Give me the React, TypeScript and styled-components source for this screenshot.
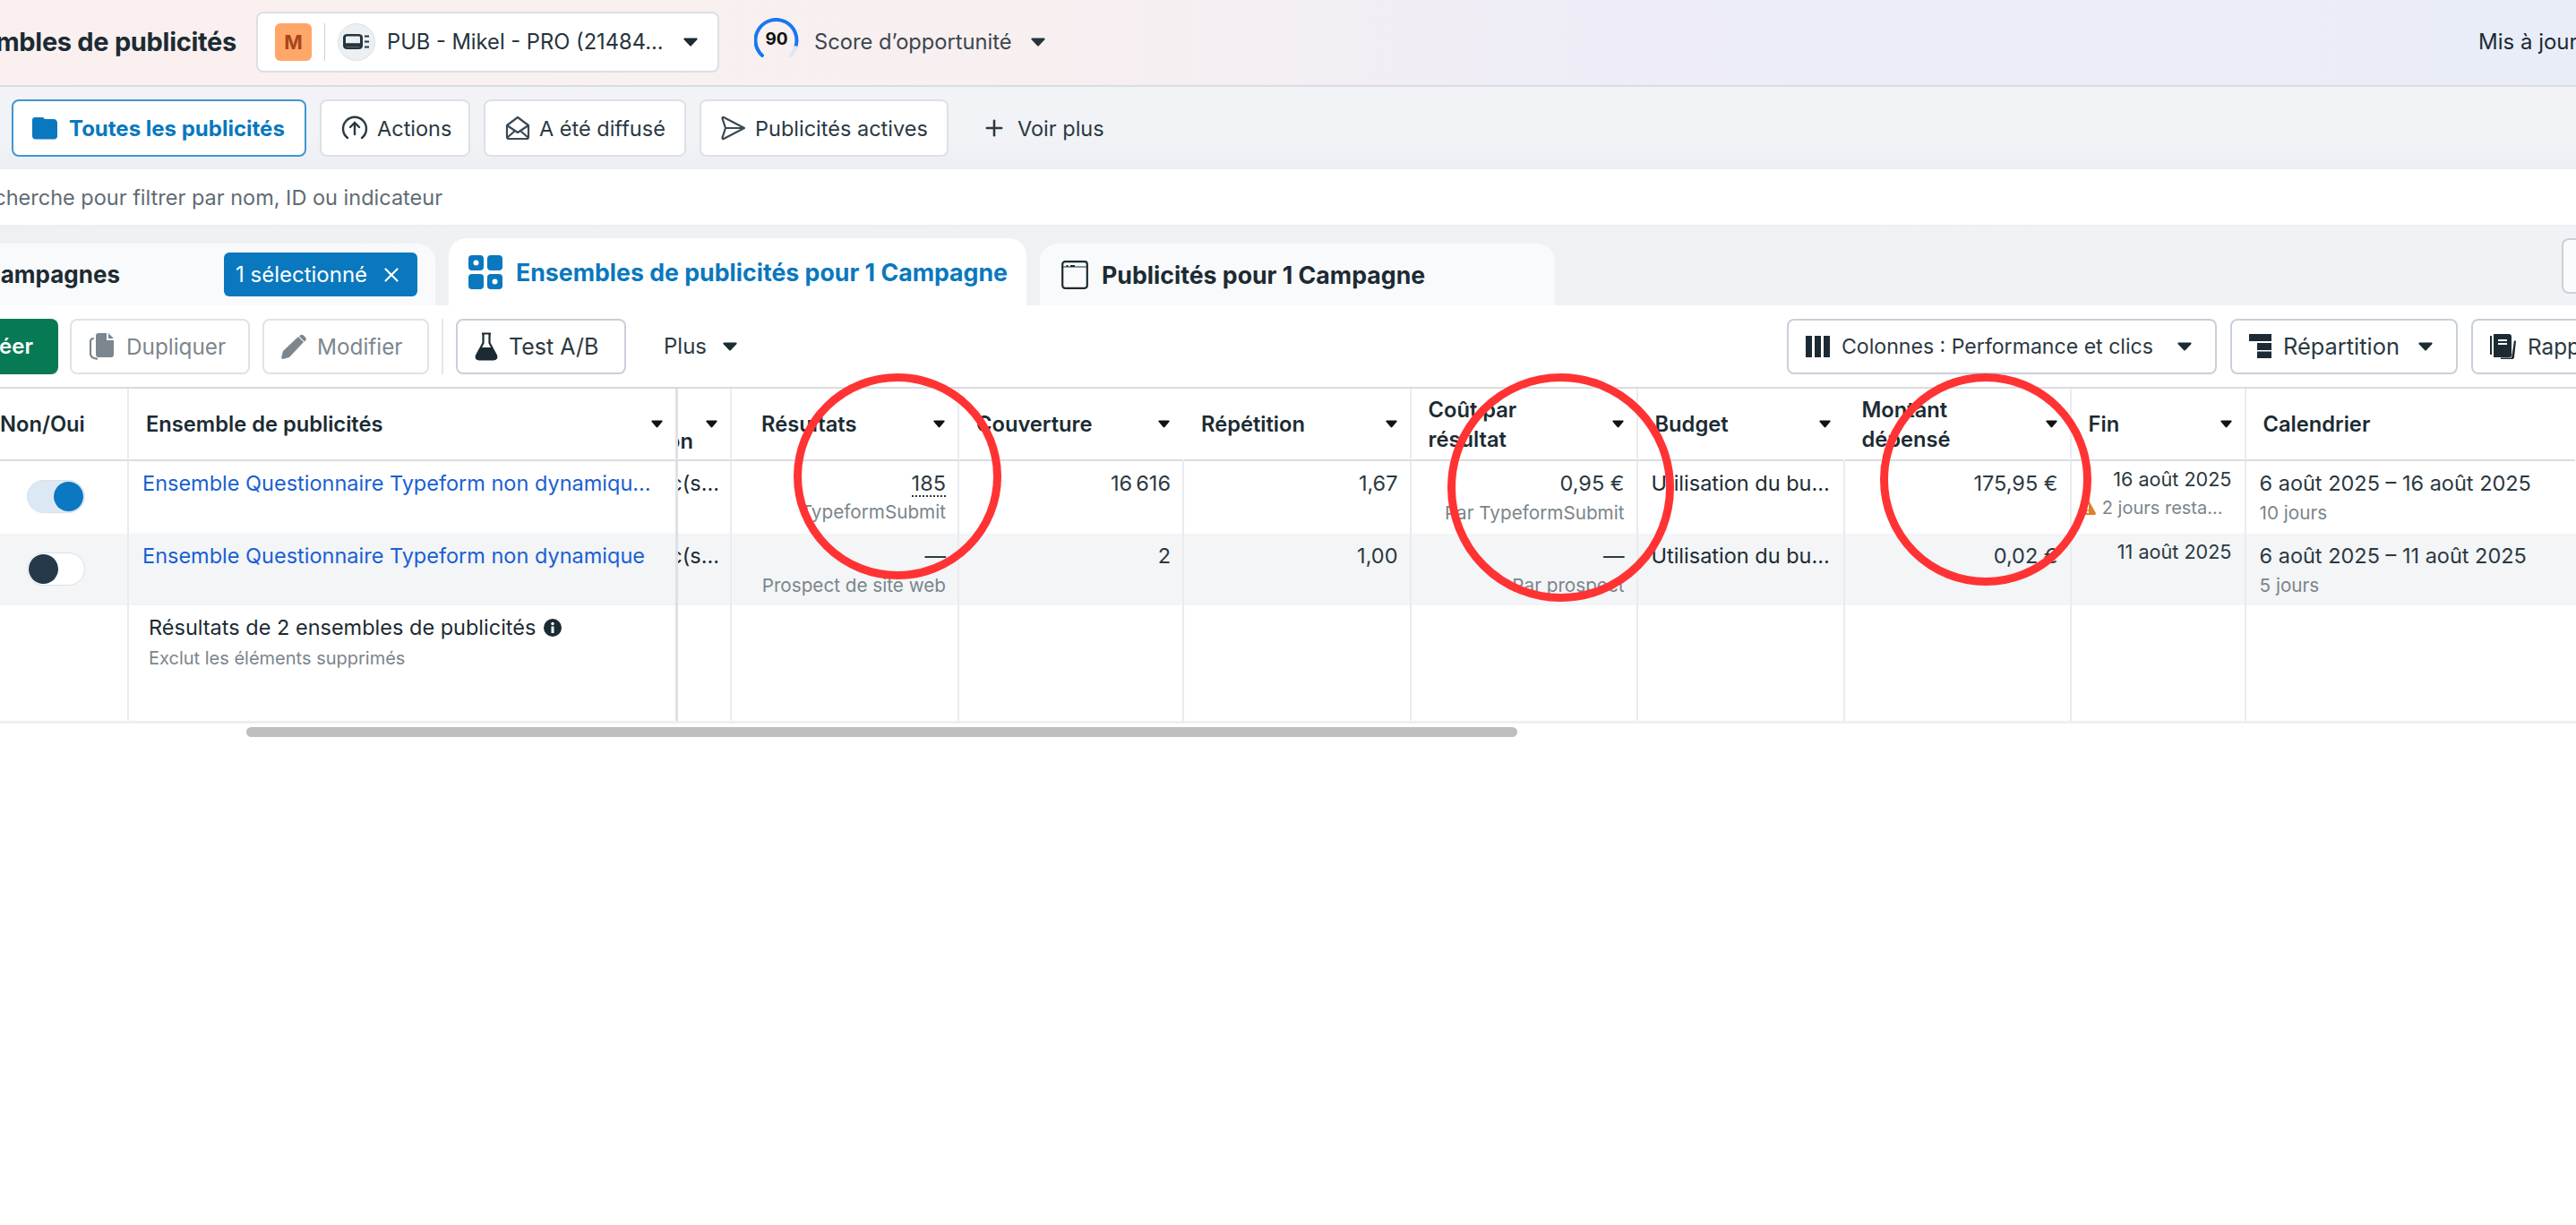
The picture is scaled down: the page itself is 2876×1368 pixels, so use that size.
import React from "react";
import styled, { createGlobalStyle } from "styled-components";
import { Plus, X } from "lucide-react";

const GlobalStyle = createGlobalStyle`
    html, body {
        margin: 0;
        padding: 0;
        background: #fff;
    }
    * {
        box-sizing: border-box;
    }
`;

const Page = styled.div`
    position: relative;
    width: 2876px;
    height: 1368px;
    overflow: hidden;
    background: #fff;
    color: #1c2b33;
    font-family: Inter, "Liberation Sans", sans-serif;
    font-size: 23.5px;
`;

const TopBar = styled.header`
    display: flex;
    align-items: center;
    height: 97px;
    padding-bottom: 2px;
    background: linear-gradient(90deg, #faf0ef 0%, #f8eff0 40%, #eeedf7 62%, #e9edf8 100%);
    border-bottom: 2px solid #d9dce1;
`;

const PageTitle = styled.h1`
    display: flex;
    justify-content: flex-end;
    width: 264px;
    margin: 0;
    overflow: hidden;
    white-space: nowrap;
    font-size: 29px;
    font-weight: 700;
    letter-spacing: -0.3px;
`;

const AccountBox = styled.div`
    display: flex;
    align-items: center;
    width: 517px;
    height: 68px;
    margin-left: 22px;
    padding-left: 19px;
    background: #fff;
    border: 2px solid #dcdfe5;
    border-radius: 8px;
`;

const AccountAvatar = styled.div`
    display: flex;
    align-items: center;
    justify-content: center;
    width: 41px;
    height: 42px;
    background: #ffa669;
    border-radius: 6px;
    color: #a8451b;
    font-size: 22px;
    font-weight: 700;
`;

const AccountDivider = styled.span`
    width: 1px;
    height: 42px;
    margin: 0 14px;
    background: #ccd0d5;
`;

const AccountIcon = styled.div`
    display: flex;
    align-items: center;
    justify-content: center;
    width: 42px;
    height: 42px;
    background: #edf0f3;
    border: 1px solid #dde1e5;
    border-radius: 50%;
`;

const AccountName = styled.span`
    margin: 0 22px 0 13px;
    white-space: nowrap;
    font-size: 23.7px;
    color: #26343d;
`;

const ScoreBox = styled.div`
    display: flex;
    align-items: center;
    margin-left: 39px;
`;

const ScoreGauge = styled.div`
    position: relative;
    display: flex;
    align-items: center;
    justify-content: center;
    width: 50px;
    height: 48px;
    margin-bottom: 6px;
    font-size: 19px;
    font-weight: 700;
    color: #111;
`;

const GaugeSvg = styled.svg`
    position: absolute;
    inset: 0;
`;

const ScoreLabel = styled.span`
    margin: 0 21px 0 17px;
    font-size: 23.7px;
    color: #3a4750;
`;

const UpdatedAt = styled.div`
    width: 109px;
    margin-left: auto;
    overflow: hidden;
    white-space: nowrap;
    font-size: 24px;
`;

const FilterBar = styled.nav`
    display: flex;
    align-items: center;
    gap: 15px;
    height: 92px;
    padding: 0 0 0 13px;
    background: linear-gradient(180deg, #f2f3f7 0%, #f2f3f7 60%, #ebeef2 100%);
`;

const FilterButton = styled.button<{ $active?: boolean; $w: number }>`
    display: flex;
    align-items: center;
    gap: ${(p) => (p.$active ? 13 : 10)}px;
    width: ${(p) => p.$w}px;
    height: 64px;
    padding: 0 0 0 ${(p) => (p.$active ? 21 : 22)}px;
    background: #fff;
    border: 2px solid ${(p) => (p.$active ? "#3f96d2" : "#dde0e6")};
    border-radius: 8px;
    color: ${(p) => (p.$active ? "#0a78be" : "#2b3942")};
    font-family: inherit;
    font-size: ${(p) => (p.$active ? 24 : 23.5)}px;
    font-weight: ${(p) => (p.$active ? 700 : 400)};
    white-space: nowrap;
`;

const MoreButton = styled.div`
    display: flex;
    align-items: center;
    gap: 12px;
    margin-left: 22px;
    color: #2b3942;
`;

const SearchBar = styled.div`
    display: flex;
    align-items: center;
    justify-content: flex-end;
    width: 494px;
    height: 62px;
    overflow: hidden;
    white-space: nowrap;
    font-size: 23.5px;
    color: #5f6b74;
`;

const TabBar = styled.div`
    display: flex;
    align-items: flex-end;
    gap: 15px;
    height: 90px;
    background: linear-gradient(90deg, #eef1f4 0%, #f1f2f6 100%);
    border-top: 2px solid #eceef1;
`;

const FirstTab = styled.div`
    display: flex;
    align-items: center;
    justify-content: space-between;
    width: 486px;
    height: 69px;
    padding: 0 20px 0 0;
    background: #f9fafc;
    border-radius: 0 20px 0 0;
`;

const ClippedTabLabel = styled.span`
    display: flex;
    justify-content: flex-end;
    width: 134px;
    overflow: hidden;
    white-space: nowrap;
    font-size: 26px;
    font-weight: 700;
`;

const SelectedBadge = styled.div`
    display: flex;
    align-items: center;
    justify-content: space-between;
    width: 216px;
    height: 49px;
    padding: 0 16px 0 13px;
    background: #0a78be;
    border-radius: 6px;
    color: #fff;
    font-size: 24px;
`;

const ActiveTab = styled.div`
    display: flex;
    align-items: center;
    gap: 15px;
    width: 645px;
    height: 75px;
    padding: 0 0 0 22px;
    background: #fff;
    border-radius: 20px 20px 0 0;
    color: #0a78be;
    font-size: 26.7px;
    font-weight: 700;
    white-space: nowrap;
`;

const OtherTab = styled(ActiveTab)`
    width: 575px;
    height: 69px;
    padding: 0 0 0 24px;
    background: #f9fafc;
    color: #1c2b33;
`;

const CornerButton = styled.div`
    width: 16px;
    height: 62px;
    margin: 0 0 13px auto;
    background: #fafbfc;
    border: 2px solid #cbd2d9;
    border-right: 0;
    border-radius: 8px 0 0 8px;
`;

const Toolbar = styled.div`
    display: flex;
    align-items: center;
    height: 91px;
`;

const ToolGroup = styled.div`
    display: flex;
    align-items: center;
    flex: none;
    gap: 14px;
`;

const ToolButton = styled.button<{ $w: number; $muted?: boolean; $size?: number }>`
    display: flex;
    align-items: center;
    gap: 12px;
    flex: none;
    width: ${(p) => p.$w}px;
    height: 62px;
    padding: 0 0 0 19px;
    background: #fff;
    border: 2px solid ${(p) => (p.$muted ? "#dfe3e8" : "#c8d0da")};
    border-radius: 8px;
    color: ${(p) => (p.$muted ? "#7b868e" : "#2b3942")};
    font-family: inherit;
    font-size: ${(p) => p.$size ?? 24.3}px;
    white-space: nowrap;
`;

const CreateButton = styled.div`
    display: flex;
    align-items: center;
    justify-content: flex-end;
    flex: none;
    width: 65px;
    height: 62px;
    margin-right: 13px;
    padding-right: 28px;
    overflow: hidden;
    background: #077a55;
    border-radius: 0 8px 8px 0;
    color: #fff;
    font-size: 24px;
    font-weight: 600;
    white-space: nowrap;
`;

const ToolSeparator = styled.span`
    flex: none;
    width: 2px;
    height: 62px;
    background: #e4e7eb;
`;

const PlusMenu = styled.div`
    display: flex;
    align-items: center;
    gap: 18px;
    margin-left: 42px;
    font-size: 24px;
    color: #2b3942;
`;

const RightTools = styled.div`
    display: flex;
    gap: 15px;
    width: 881px;
    flex: none;
    margin-left: auto;
    overflow: hidden;
`;

const ButtonCaret = styled.span`
    display: flex;
    margin-left: auto;
    padding-right: 26px;
`;

const Table = styled.div`
    border-top: 2px solid #d9dce1;
    border-bottom: 3px solid #eff0f2;
`;

const Row = styled.div<{ $h?: number }>`
    display: grid;
    grid-template-columns: 144px 613px 60px 254px 251px 253.5px 253px 231px 253px 195px 1fr;
    height: ${(p) => (p.$h ? `${p.$h}px` : "auto")};
`;

const frozenEdge = "border-right: 3px solid #e0e1e4; box-shadow: 2px 0 3px rgba(0,0,0,0.05);";

const HeadCell = styled.div<{ $bare?: boolean; $frozen?: boolean; $left?: number }>`
    position: relative;
    display: flex;
    align-items: center;
    justify-content: space-between;
    height: 81px;
    padding: 0 14px 0 ${(p) => p.$left ?? 19}px;
    background: #fff;
    border-bottom: 2px solid #d9dce1;
    border-right: 2px solid ${(p) => (p.$bare ? "transparent" : "#e9ebee")};
    font-size: 23.7px;
    font-weight: 600;
    line-height: 33px;
    ${(p) => p.$frozen && frozenEdge}
`;

const NonOuiHead = styled(HeadCell)`
    padding: 0;
`;

const ClippedHead = styled(HeadCell)`
    padding: 0 14px 0 0;
    overflow: hidden;
`;

const ClippedHeadText = styled.div`
    display: flex;
    justify-content: flex-end;
    width: 17px;
    margin-top: 38px;
    overflow: hidden;
    white-space: nowrap;
`;

const Cell = styled.div<{ $shade?: boolean; $frozen?: boolean; $end?: boolean; $last?: boolean }>`
    display: flex;
    flex-direction: column;
    align-items: ${(p) => (p.$end ? "flex-end" : "flex-start")};
    min-width: 0;
    padding: 8px 13px 0 15px;
    background: ${(p) => (p.$shade ? "#f3f5f7" : "#fff")};
    border-right: ${(p) => (p.$last ? "0" : "2px solid #e9ebee")};
    line-height: 34px;
    ${(p) => p.$frozen && frozenEdge}
`;

const ToggleCell = styled(Cell)`
    padding: 21px 0 0 30px;
`;

const Toggle = styled.span<{ $on?: boolean }>`
    display: flex;
    justify-content: ${(p) => (p.$on ? "flex-end" : "flex-start")};
    align-items: center;
    width: 65px;
    height: 37px;
    padding: 0 1px;
    background: ${(p) => (p.$on ? "#dce9f5" : "#fff")};
    border: 1px solid #dde1e6;
    border-radius: 19px;
`;

const ToggleKnob = styled.span<{ $on?: boolean }>`
    width: 33px;
    height: 33px;
    background: ${(p) => (p.$on ? "#0a78c2" : "#26394a")};
    border-radius: 50%;
`;

const NameCell = styled(Cell)`
    padding-right: 24px;
`;

const NameLink = styled.a`
    display: block;
    width: 100%;
    overflow: hidden;
    color: #1a5fd2;
    white-space: nowrap;
    text-overflow: ellipsis;
`;

const BudgetCell = styled(Cell)`
    padding-right: 4px;
    white-space: nowrap;
`;

const LeftClipped = styled.div`
    display: flex;
    justify-content: flex-end;
    width: 46px;
    overflow: hidden;
    white-space: nowrap;
`;

const ClipCell = styled(Cell)`
    padding: 8px 0 0 0;
    overflow: hidden;
`;

const Value = styled.span<{ $dotted?: boolean }>`
    color: #2b3942;
    white-space: nowrap;
    ${(p) => p.$dotted && "border-bottom: 2px dotted #2b3942; line-height: 27px; margin: 3px 0 1px;"}
`;

const Sub = styled.span`
    display: flex;
    align-items: center;
    color: #7b858c;
    font-size: 20.7px;
    line-height: 32px;
    white-space: nowrap;
`;

const DateCell = styled(Cell)`
    padding: 3px 14px 0 0;
    font-size: 21.6px;
`;

const EndNote = styled(Sub)`
    gap: 7px;
    margin: -1px 10px 0 0;
    font-size: 20px;
`;

const FootTitle = styled.div`
    display: flex;
    align-items: center;
    gap: 9px;
    margin-left: 7px;
    white-space: nowrap;
`;

const FootSub = styled.div`
    margin-left: 7px;
    color: #7b858c;
    font-size: 20px;
    white-space: nowrap;
`;

const ScrollThumb = styled.div`
    width: 1419px;
    height: 11px;
    margin: 4px 0 0 275px;
    background: #bebebe;
    border-radius: 6px;
`;

const Marker = styled.svg<{ $x: number; $y: number }>`
    position: absolute;
    left: ${(p) => p.$x}px;
    top: ${(p) => p.$y}px;
    pointer-events: none;
`;

const Caret = ({ color = "#1c2b33", small }: { color?: string; small?: boolean }) => (
    <svg width={small ? 13 : 16} height={small ? 9 : 10} viewBox="0 0 16 10" preserveAspectRatio="none" style={{ flex: "none" }}>
        <path d="M1.5 0.5h13c1 0 1.4 1 .8 1.7L9 9a1.4 1.4 0 0 1-2 0L.7 2.2C.1 1.5.5.5 1.5.5z" fill={color} />
    </svg>
);

const FolderIcon = () => (
    <svg width="28" height="26" viewBox="0 0 28 26" style={{ flex: "none" }}>
        <path d="M3 1h8c1.5 0 2.2.8 3 2h10c2 0 4 1.800 4 4v15c0 2-1.500 3.500-3.500 3.500h-21C1.500 25.500 0 24 0 22V4c0-2 1.200-3 3-3z" fill="#0a78be" />
    </svg>
);

const ActionIcon = () => (
    <svg width="30" height="30" viewBox="0 0 30 30" fill="none" stroke="#2b3942" strokeWidth="2.400" strokeLinecap="round" style={{ flex: "none" }}>
        <path d="M7 26A13 13 0 1 1 23 26" />
        <path d="M15 22V9M10 14l5-5 5 5" />
    </svg>
);

const EnvelopeIcon = () => (
    <svg width="28" height="28" viewBox="0 0 28 28" fill="none" stroke="#3b4a54" strokeWidth="2.200" strokeLinejoin="round" style={{ flex: "none" }}>
        <path d="M2 11L14 2l12 9v13a2 2 0 0 1-2 2H4a2 2 0 0 1-2-2z" />
        <path d="M2 11l12 8 12-8M2 25l9-8M26 25l-9-8" />
    </svg>
);

const SendIcon = () => (
    <svg width="28" height="28" viewBox="0 0 28 28" fill="none" stroke="#3b4a54" strokeWidth="2.200" strokeLinejoin="round" style={{ flex: "none" }}>
        <path d="M3 2l23 12L3 26c-1 .4-1.800-.4-1.500-1.300L5 14 1.500 3.300C1.200 2.400 2 1.600 3 2zM5 14h21" />
    </svg>
);

const AccountGlyph = () => (
    <svg width="30" height="17" viewBox="0 0 30 20" preserveAspectRatio="none" fill="none" style={{ flex: "none" }}>
        <rect x="1.500" y="1.500" width="19" height="17" rx="3" stroke="#26343d" strokeWidth="3" />
        <rect x="3" y="12" width="16" height="5" fill="#26343d" />
        <path d="M24 3h5M24 10h5M24 17h5" stroke="#26343d" strokeWidth="2.500" />
    </svg>
);

const GridIcon = () => (
    <svg width="38" height="38" viewBox="0 0 38 38" style={{ flex: "none" }}>
        <rect x="0" y="0" width="17" height="17" rx="4" fill="#0a78be" />
        <rect x="21" y="0" width="17" height="17" rx="4" fill="#0a78be" />
        <rect x="0" y="21" width="17" height="17" rx="4" fill="#0a78be" />
        <rect x="21" y="21" width="17" height="17" rx="4" fill="#0a78be" />
        <circle cx="8.500" cy="8.500" r="3" fill="#fff" />
        <circle cx="29.500" cy="29.500" r="3" fill="#fff" />
    </svg>
);

const WindowIcon = () => (
    <svg width="30" height="32" viewBox="0 0 30 32" fill="none" style={{ flex: "none" }}>
        <rect x="1.200" y="1.200" width="27.600" height="29.600" rx="3" stroke="#1c2b33" strokeWidth="2.200" />
        <path d="M1 7h28" stroke="#1c2b33" strokeWidth="1" />
        <path d="M5.500 6h2M10 6h5" stroke="#1c2b33" strokeWidth="2.200" />
    </svg>
);

const DuplicateIcon = () => (
    <svg width="30" height="30" viewBox="0 0 30 30" style={{ flex: "none" }}>
        <path d="M5 6c-2 .4-3 1.500-3 3v14c0 2 1.600 4 4 5l3 .6" fill="none" stroke="#7b868e" strokeWidth="2.200" strokeLinecap="round" />
        <path d="M11 0h9v8h8v16a3 3 0 0 1-3 3H11a3 3 0 0 1-3-3V3a3 3 0 0 1 3-3zM22 0l6 6h-6z" fill="#7b868e" />
    </svg>
);

const PencilIcon = () => (
    <svg width="28" height="28" viewBox="0 0 28 28" style={{ flex: "none" }}>
        <path d="M19 3l6 6L9 26l-7 2c-1 0-2-1-1.800-2L2 19zM21 1.500c1-1 2.500-1.200 3.500-.2l2.700 2.700c1 1 .8 2.500-.2 3.500l-1 1-6-6z" fill="#7b868e" />
    </svg>
);

const FlaskIcon = () => (
    <svg width="26" height="32" viewBox="0 0 26 32" fill="none" style={{ flex: "none" }}>
        <path d="M8 1.500h10M9.500 2v10L2 26c-1 2.400.5 4.500 3 4.500h16c2.500 0 4-2.100 3-4.500l-7.500-14V2" stroke="#1c2b33" strokeWidth="2.200" />
        <path d="M6.500 17h13l5 11c.4 1.500-1 3-3 3H4c-2 0-3.400-1.500-3-3z" fill="#1c2b33" />
    </svg>
);

const ColumnsIcon = () => (
    <svg width="28" height="26" viewBox="0 0 28 26" fill="#1c2b33" style={{ flex: "none" }}>
        <rect x="0" y="1" width="7" height="24" />
        <rect x="10" y="1" width="7" height="24" />
        <rect x="20" y="1" width="7" height="24" />
    </svg>
);

const BreakdownIcon = () => (
    <svg width="26" height="27" viewBox="0 0 26 27" fill="#1c2b33" style={{ flex: "none" }}>
        <rect x="0" y="0" width="25" height="8" />
        <rect x="9" y="10" width="16" height="8" />
        <rect x="9" y="19.500" width="16" height="7.500" />
    </svg>
);

const ReportIcon = () => (
    <svg width="30" height="30" viewBox="0 0 30 30" style={{ flex: "none" }}>
        <path d="M0 3h2v21H0zM4 1h17a3 3 0 0 1 3 3v21a2 2 0 0 1-2 2H4z" fill="#1c2b33" />
        <path d="M9 7h10v2H9zM9 11h10v2H9z" fill="#fff" />
        <path d="M27 8l2 1-2 18c-.3 1.500-1 2-2.500 2H12v-1.500h12z" fill="#1c2b33" />
    </svg>
);

const InfoIcon = () => (
    <svg width="20" height="20" viewBox="0 0 20 20" style={{ flex: "none" }}>
        <circle cx="10" cy="10" r="10" fill="#1c2b33" />
        <circle cx="10" cy="5.500" r="1.700" fill="#fff" />
        <rect x="8.500" y="8.500" width="3" height="7.500" fill="#fff" />
    </svg>
);

const WarnIcon = () => (
    <svg width="18" height="18" viewBox="0 0 19 18" style={{ flex: "none" }}>
        <path d="M8 1c.7-1.200 2.300-1.200 3 0l7.700 14c.6 1.200-.2 2.500-1.500 2.500H1.800C.5 17.500-.3 16.200.3 15z" fill="#d9822b" />
        <rect x="8.400" y="5" width="2.200" height="6.500" fill="#fff" />
        <rect x="8.400" y="13" width="2.200" height="2.200" fill="#fff" />
    </svg>
);

const Gauge = () => (
    <GaugeSvg width="50" height="48" viewBox="0 0 50 48" fill="none">
        <path d="M9 42A23 23 0 1 1 46 33" stroke="#1877f2" strokeWidth="4" strokeLinecap="round" />
        <path d="M46 33A23 23 0 0 1 41 42" stroke="#dfe6f0" strokeWidth="4" strokeLinecap="round" />
    </GaugeSvg>
);

// one red hand-drawn ring over the table
const Ring = ({ x, y, w, h }: { x: number; y: number; w: number; h: number }) => (
    <Marker $x={x} $y={y} width={w} height={h} viewBox={`0 0 ${w} ${h}`} fill="none">
        <ellipse cx={w / 2} cy={h / 2} rx={w / 2 - 4.500} ry={h / 2 - 4.500} stroke="#ff3333" strokeWidth="9" />
    </Marker>
);

const headers: { label: React.ReactNode; bare?: boolean; left?: number }[] = [
    { label: "Résultats", left: 33 },
    { label: "Couverture", bare: true },
    { label: "Répétition" },
    { label: <>Coût par<br />résultat</> },
    { label: "Budget", bare: true },
    { label: <>Montant<br />dépensé</> },
    { label: "Fin" },
];

const rows = [
    {
        on: true,
        name: "Ensemble Questionnaire Typeform non dynamique - Copie",
        result: "185",
        resultSub: "TypeformSubmit",
        reach: "16\u202f616",
        freq: "1,67",
        cost: "0,95 €",
        costSub: "Par TypeformSubmit",
        spent: "175,95 €",
        end: "16 août 2025",
        left: "2 jours resta...",
        range: "6 août 2025 – 16 août 2025",
        days: "10 jours",
    },
    {
        on: false,
        name: "Ensemble Questionnaire Typeform non dynamique",
        result: "—",
        resultSub: "Prospect de site web",
        reach: "2",
        freq: "1,00",
        cost: "—",
        costSub: "Par prospect",
        spent: "0,02 €",
        end: "11 août 2025",
        left: "",
        range: "6 août 2025 – 11 août 2025",
        days: "5 jours",
    },
];

export default function App() {
    return (
        <Page>
            <GlobalStyle />
            <TopBar>
                <PageTitle>Ensembles de publicités</PageTitle>
                <AccountBox>
                    <AccountAvatar>M</AccountAvatar>
                    <AccountDivider />
                    <AccountIcon><AccountGlyph /></AccountIcon>
                    <AccountName>PUB - Mikel - PRO (21484...</AccountName>
                    <Caret />
                </AccountBox>
                <ScoreBox>
                    <ScoreGauge>
                        <Gauge />
                        90
                    </ScoreGauge>
                    <ScoreLabel>Score d’opportunité</ScoreLabel>
                    <Caret color="#26343d" />
                </ScoreBox>
                <UpdatedAt>Mis à jour il y a</UpdatedAt>
            </TopBar>

            <FilterBar>
                <FilterButton $active $w={329}><FolderIcon />Toutes les publicités</FilterButton>
                <FilterButton $w={168}><ActionIcon />Actions</FilterButton>
                <FilterButton $w={226}><EnvelopeIcon />A été diffusé</FilterButton>
                <FilterButton $w={278}><SendIcon />Publicités actives</FilterButton>
                <MoreButton><Plus size={28} strokeWidth={2.2} />Voir plus</MoreButton>
            </FilterBar>

            <SearchBar>Recherche pour filtrer par nom, ID ou indicateur</SearchBar>

            <TabBar>
                <FirstTab>
                    <ClippedTabLabel>Campagnes</ClippedTabLabel>
                    <SelectedBadge>1 sélectionné <X size={26} strokeWidth={2} /></SelectedBadge>
                </FirstTab>
                <ActiveTab><GridIcon />Ensembles de publicités pour 1 Campagne</ActiveTab>
                <OtherTab><WindowIcon />Publicités pour 1 Campagne</OtherTab>
                <CornerButton />
            </TabBar>

            <Toolbar>
                <CreateButton>Créer</CreateButton>
                <ToolGroup>
                    <ToolButton $muted $w={201}><DuplicateIcon />Dupliquer</ToolButton>
                    <ToolButton $muted $w={186}><PencilIcon />Modifier</ToolButton>
                    <ToolSeparator />
                    <ToolButton $w={190} $size={25}><FlaskIcon />Test A/B</ToolButton>
                </ToolGroup>
                <PlusMenu>Plus <Caret /></PlusMenu>
                <RightTools>
                    <ToolButton $w={480} $size={23.1}><ColumnsIcon />Colonnes : Performance et clics<ButtonCaret><Caret /></ButtonCaret></ToolButton>
                    <ToolButton $w={254} $size={25.4}><BreakdownIcon />Répartition<ButtonCaret><Caret /></ButtonCaret></ToolButton>
                    <ToolButton $w={200}><ReportIcon />Rapports</ToolButton>
                </RightTools>
            </Toolbar>

            <Table>
                <Row>
                    <NonOuiHead>Non/Oui</NonOuiHead>
                    <HeadCell $frozen>Ensemble de publicités <Caret small color="#111" /></HeadCell>
                    <ClippedHead><ClippedHeadText>on</ClippedHeadText><Caret small color="#111" /></ClippedHead>
                    {headers.map((h, i) => (
                        <HeadCell key={i} $bare={h.bare} $left={h.left}>
                            <span>{h.label}</span>
                            <Caret small color="#111" />
                        </HeadCell>
                    ))}
                    <HeadCell $bare>Calendrier</HeadCell>
                </Row>

                {rows.map((r, i) => {
                    const shade = i === 1;
                    return (
                        <Row key={i} $h={i === 0 ? 81 : 80}>
                            <ToggleCell $shade={shade}>
                                <Toggle $on={r.on}><ToggleKnob $on={r.on} /></Toggle>
                            </ToggleCell>
                            <NameCell $shade={shade} $frozen><NameLink>{r.name}</NameLink></NameCell>
                            <ClipCell $shade={shade}><LeftClipped>Clic(s...</LeftClipped></ClipCell>
                            <Cell $shade={shade} $end>
                                <Value $dotted={i === 0}>{r.result}</Value>
                                <Sub>{r.resultSub}</Sub>
                            </Cell>
                            <Cell $shade={shade} $end><Value>{r.reach}</Value></Cell>
                            <Cell $shade={shade} $end><Value>{r.freq}</Value></Cell>
                            <Cell $shade={shade} $end>
                                <Value>{r.cost}</Value>
                                <Sub>{r.costSub}</Sub>
                            </Cell>
                            <BudgetCell $shade={shade}>Utilisation du bu...</BudgetCell>
                            <Cell $shade={shade} $end><Value>{r.spent}</Value></Cell>
                            <DateCell $shade={shade} $end>
                                <Value>{r.end}</Value>
                                {r.left && <EndNote><WarnIcon />{r.left}</EndNote>}
                            </DateCell>
                            <Cell $shade={shade} $last>
                                <Value>{r.range}</Value>
                                <Sub>{r.days}</Sub>
                            </Cell>
                        </Row>
                    );
                })}

                <Row $h={129}>
                    <Cell />
                    <Cell $frozen>
                        <FootTitle>Résultats de 2 ensembles de publicités <InfoIcon /></FootTitle>
                        <FootSub>Exclut les éléments supprimés</FootSub>
                    </Cell>
                    <Cell /><Cell /><Cell /><Cell /><Cell /><Cell /><Cell /><Cell /><Cell $last />
                </Row>
            </Table>

            <ScrollThumb />

            <Ring x={886} y={417} w={232} h={230} />
            <Ring x={1616} y={417} w={253} h={255} />
            <Ring x={2099} y={417} w={236} h={237} />
        </Page>
    );
}
